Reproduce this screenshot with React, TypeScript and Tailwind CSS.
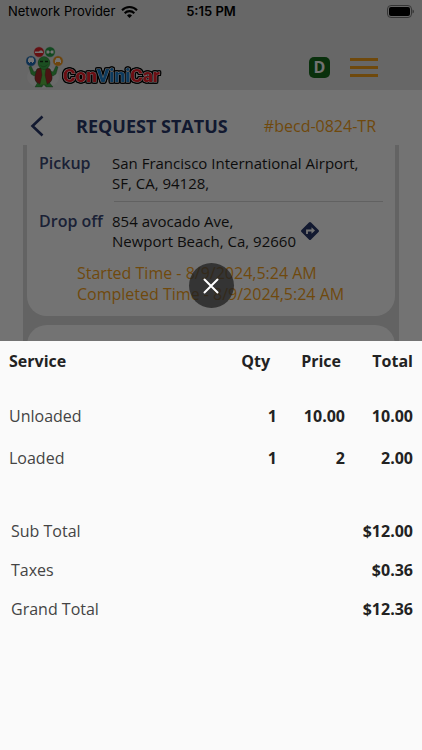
import clsx from "clsx";
import React from "react";

type Line = {
	name: string;
	qty: string;
	price: string;
	total: string;
};

const lines: Line[] = [
	{ name: "Unloaded", qty: "1", price: "10.00", total: "10.00" },
	{ name: "Loaded", qty: "1", price: "2", total: "2.00" },
];

const totals = [
	{ label: "Sub Total", amount: "$12.00" },
	{ label: "Taxes", amount: "$0.36" },
	{ label: "Grand Total", amount: "$12.36" },
];

const Logo = () => (
	<svg viewBox="0 0 140 46" className="w-[140px] h-[46px]" role="img" aria-label="ConViniCar">
		<ellipse cx="17" cy="33" rx="16" ry="11" fill="#f4f4f4" opacity="0.6" />
		{/* service bubbles */}
		<g stroke="#ddd" strokeWidth="0.500">
			<circle cx="5" cy="17" r="5.200" fill="#1f6db5" />
			<circle cx="13" cy="8" r="5.200" fill="#e0242b" />
			<circle cx="24" cy="8" r="5.200" fill="#2aa34a" />
			<circle cx="32" cy="17" r="5.200" fill="#f39a1e" />
		</g>
		<g fill="#fff">
			<path d="M2 18v-2.500l1-2h4l1 2V18H7v1H6v-1H4v1H3v-1z" />
			<path d="M9 9V7.500h4l1-1h2l1 1.500v1z" />
			<path d="M20.500 9.500v-3h2.500v1h2v-1h2.500v3h-2.500v-1h-2v1z" />
			<path d="M29 19v-2.500l1.500-2.500h3l1.500 2.500V19h-1v-1h-4v1z" />
		</g>
		{/* turtle */}
		<g stroke="#1c3d1e" strokeWidth="0.300">
			<path d="M12 26 8 28l-3-6-2 1 2 7 3 2 5-2zM23 26l4 2 3-6 2 1-2 7-3 2-5-2z" fill="#3fae49" />
			<path d="M12 38l-3 5h7l2-4zM23 38l4 5h-7l-3-4z" fill="#3fae49" />
			<path d="M11 25q6-3 13 0l2 8q-1 7-6 8h-6q-5-2-5-8z" fill="#5dbb46" />
			<path d="M11 25l4-1 1 7-2 9q-6-2-5-8zM24 25l-4-1-1 7 2 9q6-2 5-8z" fill="#a92a2c" />
			<ellipse cx="18" cy="19" rx="6" ry="6.500" fill="#3fae49" />
			<path d="M14.500 21.500q3.500 3 7-1" fill="none" />
		</g>
		<path d="M14 17.500h3M19 17.500h3" stroke="#173018" strokeWidth="1.400" />
		<g
			className="[filter:drop-shadow(1px_0_#000)_drop-shadow(-1px_0_#000)_drop-shadow(0_1px_#000)_drop-shadow(0_-1px_#000)]"
			fontFamily="Roboto, sans-serif"
			fontWeight="800"
			fontSize="19"
			strokeLinejoin="round"
		>
			<text x="37" y="38" stroke="#fff" strokeWidth="1" paintOrder="stroke">
				<tspan fill="#f0202b">Con</tspan>
				<tspan fill="#1c80d0">Vini</tspan>
				<tspan fill="#f0202b">Car</tspan>
			</text>
		</g>
	</svg>
);

const StatusBar = () => (
	<div className="grid grid-cols-3 items-center h-6 px-2 font-['Inter',sans-serif] text-[13px] text-black">
		<div className="flex items-center gap-[6px] whitespace-nowrap">
			Network Provider
			<svg viewBox="0 0 17 12" className="w-[17px] h-3 shrink-0" aria-hidden="true">
				<g fill="none" stroke="#000" strokeWidth="2.100">
					<path d="M1 4.200a10.500 10.500 0 0 1 15 0" />
					<path d="M3.700 7.200a6.700 6.700 0 0 1 9.600 0" />
				</g>
				<path d="M8.500 12 6 9.500a3.600 3.600 0 0 1 5 0z" />
			</svg>
		</div>
		<div className="text-center font-semibold">5:15 PM</div>
		<svg viewBox="0 0 28 13" className="w-7 h-[13px] mb-[2px] justify-self-end" aria-hidden="true">
			<rect x="1.500" y="0.500" width="24" height="12" rx="3.500" fill="none" stroke="#777" />
			<rect x="3" y="2" width="21" height="9" rx="2" />
			<path d="M26.500 4.500v4q1.500-.5 1.500-2t-1.500-2" fill="#777" />
		</svg>
	</div>
);

const Header = () => (
	<header className="bg-[#e4e4e4] h-[90px]">
		<StatusBar />
		<div className="flex items-center pl-[26px] pr-11 pt-5">
			<Logo />
			<div className="flex items-center gap-5 ml-auto">
				<span className="flex items-center justify-center size-[21px] rounded-[5px] bg-[#156b1c] text-white font-bold text-base leading-5">
					D
				</span>
				<button type="button" aria-label="Menu" className="flex flex-col gap-[5px]">
					<span className="w-7 h-[3px] bg-[#f7a31c]" />
					<span className="w-7 h-[3px] bg-[#f7a31c]" />
					<span className="w-7 h-[3px] bg-[#f7a31c]" />
				</button>
			</div>
		</div>
	</header>
);

type StopProps = {
	label: string;
	address: string[];
	children?: React.ReactNode;
};

const Stop = ({ label, address, children }: StopProps) => (
	<div className="flex leading-5">
		<div className="w-[73px] shrink-0 font-semibold text-[#3c4a78]">{label}</div>
		<div className="text-[15px] text-[#1c1c1c]">
			{address.map((row) => (
				<div key={row}>{row}</div>
			))}
		</div>
		{children}
	</div>
);

const RequestCard = () => (
	<section className="bg-white rounded-b-[20px] px-3 pt-2 pb-[11px]">
		<Stop label="Pickup" address={["San Francisco International Airport,", "SF, CA, 94128,"]} />
		<hr className="ml-[75px] mt-2 mb-[9px] border-[#d8d8d8]" />
		<Stop label="Drop off" address={["854 avocado Ave,", "Newport Beach, Ca, 92660"]}>
			<a href="#directions" aria-label="Directions" className="self-center ml-1">
				<svg viewBox="0 0 20 20" className="size-5">
					<rect x="3.200" y="3.200" width="13.600" height="13.600" rx="1.500" fill="#28386b" transform="rotate(45 10 10)" />
					<path d="M7 13V9.500h5" fill="none" stroke="#fff" strokeWidth="1.800" />
					<path d="M11.500 6.200 15 9.500l-3.500 3.300z" fill="#fff" />
				</svg>
			</a>
		</Stop>
		<div className="pl-[38px] mt-3 text-base leading-[21px] font-medium text-[#f7a31c]">
			<div>Started Time - 8/9/2024,5:24 AM</div>
			<div>Completed Time - 8/9/2024,5:24 AM</div>
		</div>
	</section>
);

const InvoiceSheet = () => (
	<div className="bg-[#fafafa] text-base text-[#222] px-[9px] pt-2 pb-[129px]">
		<table className="w-full text-right">
			<thead>
				<tr className="h-6 align-middle">
					<th className="text-left">Service</th>
					<th className="w-16 pr-[7px]">Qty</th>
					<th className="w-[68px] pr-1">Price</th>
					<th className="w-[68px]">Total</th>
				</tr>
			</thead>
			<tbody>
				<tr className="h-[22px]" />
				{lines.map(({ name, qty, price, total }) => (
					<tr key={name} className="h-[42px] font-bold">
						<td className="text-left font-normal text-[#444]">{name}</td>
						<td>{qty}</td>
						<td>{price}</td>
						<td>{total}</td>
					</tr>
				))}
			</tbody>
		</table>
		<dl className="mt-10 pl-[2px]">
			{totals.map(({ label, amount }, i) => (
				<div key={label} className={clsx("flex justify-between leading-6", i > 0 && "mt-[15px]")}>
					<dt className="text-[#444]">{label}</dt>
					<dd className="font-bold">{amount}</dd>
				</div>
			))}
		</dl>
	</div>
);

const App = () => {
	return (
		<div className="relative h-screen overflow-hidden bg-white font-['Open_Sans',sans-serif] text-base">
			<Header />
			<div className="flex items-center h-[55px] pl-[30px] pr-[46px] pt-[18px] pb-[1px]">
				<button type="button" aria-label="Back">
					<svg viewBox="0 0 14 22" className="w-[14px] h-[22px]">
						<path d="M12.500 1.500 2.500 11l10 9.500" fill="none" stroke="#28386b" strokeWidth="2.600" />
					</svg>
				</button>
				<h1 className="ml-8 text-lg font-bold text-[#28386b]">REQUEST STATUS</h1>
				<span className="ml-auto font-medium text-[#f7a31c]">#becd-0824-TR</span>
			</div>
			<main className="mx-[23px] px-1 bg-[#dcdcdc] flex flex-col gap-[9px]">
				<RequestCard />
				<section className="bg-white rounded-[20px] h-[600px]" />
			</main>

			<div className="absolute inset-0 bg-black/55 flex flex-col justify-end">
				<button
					type="button"
					aria-label="Close"
					className="self-center mb-[33px] size-[45px] rounded-full bg-[#1f1f1f]/75 flex items-center justify-center"
				>
					<svg viewBox="0 0 16 16" className="size-4">
						<path d="M1.500 1.500l13 13M14.500 1.500l-13 13" stroke="#fff" strokeWidth="2" strokeLinecap="round" />
					</svg>
				</button>
				<InvoiceSheet />
			</div>
		</div>
	);
};

export default App;
